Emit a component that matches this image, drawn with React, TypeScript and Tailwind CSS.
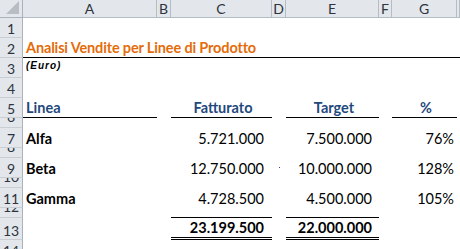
import React from 'react'

type Cell = { text?: string; cls?: string }
type Row = { n: number; thin?: boolean; cells: Record<string, Cell> }

const cols = ['A', 'B', 'C', 'D', 'E', 'F', 'G', 'H']

const num = 'justify-end pr-[8px]'
const numE = 'justify-end pr-[7px]'
const pct = 'justify-end pr-[3px]'
const line = 'border-b border-black'
const dbl = 'border-b-[3px] border-double border-black'

const rows: Row[] = [
  { n: 1, cells: {} },
  {
    n: 2,
    cells: {
      A: { text: 'Analisi Vendite per Linee di Prodotto', cls: `${line} font-bold text-[#e46c0a] whitespace-nowrap tracking-[-0.15px]` },
      B: { cls: line }, C: { cls: line }, D: { cls: line }, E: { cls: line }, F: { cls: line }, G: { cls: line }, H: { cls: line },
    },
  },
  {
    n: 3,
    cells: {
      A: { text: '(Euro)', cls: "items-center pb-[3px] font-['Liberation_Sans',sans-serif] text-[10px] tracking-[1px] font-bold italic" },
    },
  },
  { n: 4, cells: {} },
  {
    n: 5,
    cells: {
      A: { text: 'Linea', cls: `${line} font-bold text-[#1f497d]` },
      C: { text: 'Fatturato', cls: `${line} justify-center font-bold text-[#1f497d]` },
      E: { text: 'Target', cls: `${line} justify-center font-bold text-[#1f497d]` },
      G: { text: '%', cls: `${line} justify-center font-bold text-[#1f497d]` },
    },
  },
  { n: 6, thin: true, cells: {} },
  {
    n: 7,
    cells: {
      A: { text: 'Alfa', cls: 'font-bold' },
      C: { text: '5.721.000', cls: num },
      E: { text: '7.500.000', cls: numE },
      G: { text: '76%', cls: pct },
    },
  },
  { n: 8, thin: true, cells: {} },
  {
    n: 9,
    cells: {
      A: { text: 'Beta', cls: 'font-bold' },
      C: { text: '12.750.000', cls: num },
      D: { cls: 'relative' },
      E: { text: '10.000.000', cls: numE },
      G: { text: '128%', cls: pct },
    },
  },
  { n: 10, thin: true, cells: {} },
  {
    n: 11,
    cells: {
      A: { text: 'Gamma', cls: 'font-bold' },
      C: { text: '4.728.500', cls: num },
      E: { text: '4.500.000', cls: numE },
      G: { text: '105%', cls: pct },
    },
  },
  { n: 12, thin: true, cells: { C: { cls: line }, E: { cls: line } } },
  {
    n: 13,
    cells: {
      C: { text: '23.199.500', cls: `${dbl} ${num} font-bold` },
      E: { text: '22.000.000', cls: `${dbl} ${numE} font-bold` },
    },
  },
  { n: 14, cells: {} },
]

function Corner() {
  return (
    <div className="relative bg-[#e3e6ea] border-r border-b border-[#a9b1bb]">
      <svg className="absolute right-[3px] bottom-[3px]" width="13" height="13" viewBox="0 0 13 13">
        <polygon points="13,0 13,13 0,13" fill="#b8bdc3" />
      </svg>
    </div>
  )
}

export default function App() {
  return (
    <div className="w-[460px] h-[249px] overflow-hidden bg-white font-['Lato','Liberation_Sans',sans-serif] text-[14.5px] text-black">
      <div className="grid grid-cols-[23px_134px_14px_101px_14px_93px_13px_65px_1fr] grid-rows-[18px_20px_20px_20px_20px_20px_10px_20px_10px_20px_10px_20px_10px_22px_20px]">
        <Corner />
        {cols.map((c) => (
          <div
            key={c}
            className="flex items-center justify-center bg-[#e3e6ea] border-r border-b border-[#b4bcc6] text-[14px] leading-none text-[#2c3440]"
          >
            {c === 'H' ? '' : c}
          </div>
        ))}
        {rows.map((r) => (
          <React.Fragment key={r.n}>
            <div
              className={`flex justify-center overflow-hidden bg-[#e3e6ea] border-r border-b border-r-[#a9b1bb] border-b-[#c9ced5] text-[14px] leading-[17px] text-[#2c3440] ${
                r.thin ? 'items-start' : 'items-end'
              }`}
            >
              <span className={r.thin ? 'mt-[-10px]' : ''}>{r.n}</span>
            </div>
            {cols.map((c) => {
              const cell = r.cells[c] || {}
              return (
                <div
                  key={c}
                  className={`flex items-end pl-[3px] leading-[18px] ${cell.cls || ''}`}
                >
                  {cell.text}
                  {r.n === 9 && c === 'D' && (
                    <span className="absolute left-[7px] top-[9px] w-[1px] h-[1px] bg-[#2b3fd6]" />
                  )}
                </div>
              )
            })}
          </React.Fragment>
        ))}
      </div>
    </div>
  )
}
